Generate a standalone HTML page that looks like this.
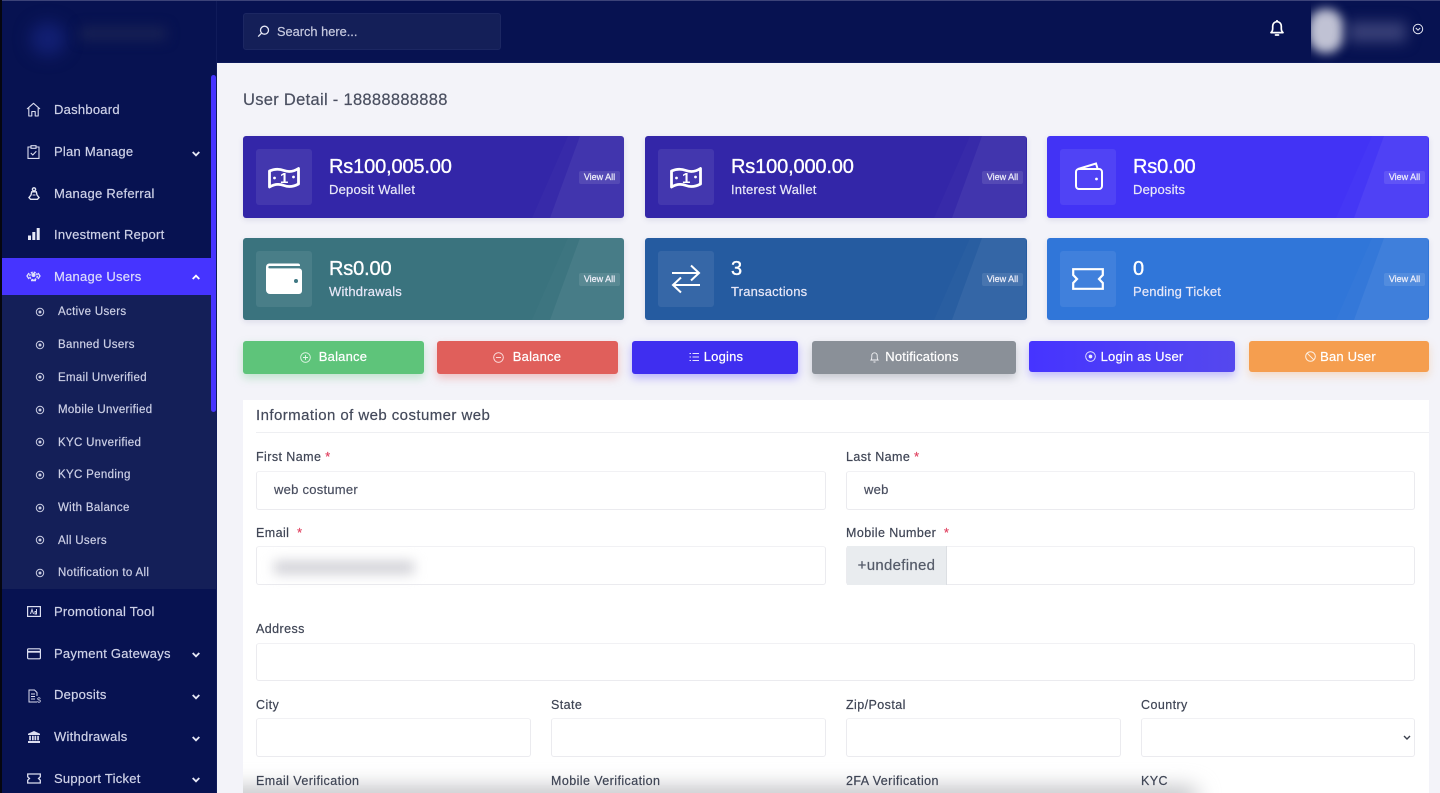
<!DOCTYPE html>
<html lang="en"><head><meta charset="utf-8"><title>User Detail</title>
<style>
*{box-sizing:border-box;margin:0;padding:0}
html,body{width:1440px;height:793px;overflow:hidden;background:#f3f3f9;font-family:"Liberation Sans",sans-serif}
#root{position:relative;width:1440px;height:793px;overflow:hidden;background:#f3f3f9;-webkit-text-stroke:.2px}
.a{position:absolute}
.t{position:absolute;white-space:nowrap;line-height:20px;height:20px;margin-top:1px}
svg{position:absolute;display:block;overflow:visible}
.n{left:54px;font-size:13px;letter-spacing:.25px;color:#cfd2e8}
.s{left:58px;font-size:11.5px;letter-spacing:.33px;color:#cdd0e6}
.card{position:absolute;width:381px;height:82px;border-radius:3px;overflow:hidden;box-shadow:0 2px 6px rgba(60,60,120,.12)}
.card i{position:absolute;inset:0;background:rgba(255,255,255,.02);clip-path:polygon(325px 0,381px 0,381px 82px,289px 82px)}
.card b{position:absolute;inset:0;background:rgba(255,255,255,.055);clip-path:polygon(337px 0,381px 0,381px 82px,307px 82px)}
.box{position:absolute;left:13px;top:13px;width:56px;height:56px;background:rgba(255,255,255,.08);border-radius:3px}
.val{position:absolute;left:86px;top:19px;font-size:20px;line-height:24px;color:#fff;letter-spacing:-.15px;white-space:nowrap;-webkit-text-stroke:.35px #fff}
.lab{position:absolute;left:86px;top:44px;font-size:13px;line-height:20px;color:#e8e8f8;letter-spacing:.2px;white-space:nowrap}
.va{position:absolute;right:4px;top:35px;width:41px;height:13px;background:rgba(255,255,255,.1);border-radius:2px;color:#f0f0fa;font-size:9px;line-height:13px;text-align:center}
.btn{position:absolute;top:341px;height:33px;border-radius:3px;color:#fff;font-size:13px;line-height:32px;text-align:center;letter-spacing:.2px}
.l{position:absolute;font-size:12.5px;line-height:16px;color:#3f4555;letter-spacing:.42px;white-space:nowrap;margin-top:1px}
.l em{color:#e0405f;font-style:normal}
.f{position:absolute;background:#fff;border:1px solid #ebebef;border-top-color:#f1f1f4;border-radius:3px}
</style></head><body><div id="root">

<!-- Header -->
<div class="a" style="left:0;top:0;width:1440px;height:63px;background:#071251;border-top:1px solid #3c4378;border-bottom:1px solid #0d1a5c"></div>
<div class="a" style="left:243px;top:13px;width:258px;height:37px;background:#141f58;border:1px solid #1c2762;border-radius:3px"></div>
<svg style="left:257px;top:25px" width="13" height="13" viewBox="0 0 13 13" fill="none" stroke="#e4e6f4" stroke-width="1.3"><circle cx="7.5" cy="5.2" r="4"/><path d="M4.6 8.1 1.2 11.6"/></svg>
<div class="t" style="left:277px;top:21px;font-size:12.8px;color:#c7cae0;letter-spacing:0">Search here...</div>
<svg style="left:1269px;top:19px" width="16" height="18" viewBox="0 0 16 18" fill="none" stroke="#fff" stroke-width="1.7"><path d="M2 13.6c1.3-1 1.7-2.200 1.700-4.200V7a4.300 4.300 0 0 1 8.600 0v2.400c0 2 .4 3.200 1.700 4.200z" stroke-linejoin="round"/><path d="M6.500 16h3" stroke-linecap="round"/><path d="M8 1v1.500"/></svg>
<div class="a" style="left:1308px;top:9px;width:36px;height:44px;background:#c0c2d4;filter:blur(5px);border-radius:45%;clip-path:inset(-10px -20px -10px 3px)"></div>
<div class="a" style="left:1348px;top:22px;width:58px;height:20px;background:#3a4178;filter:blur(7px)"></div>
<svg style="left:1412px;top:23px" width="12" height="12" viewBox="0 0 12 12" fill="none" stroke="#e6e7f2" stroke-width="1"><circle cx="6" cy="6" r="4.700"/><path d="M3.800 5l2.200 2.200L8.200 5"/></svg>

<!-- Sidebar -->
<div class="a" style="left:0;top:0;width:2px;height:793px;background:#05060f"></div>
<div class="a" style="left:2px;top:1px;width:215px;height:792px;background:#071251;border-right:1px solid #101b5a"></div>
<div class="a" style="left:30px;top:22px;width:36px;height:34px;background:#121f72;filter:blur(8px);border-radius:50%"></div>
<div class="a" style="left:80px;top:27px;width:86px;height:13px;background:#182154;filter:blur(6px)"></div>
<div class="a" style="left:2px;top:258px;width:210px;height:37px;background:#4634ff"></div>
<div class="a" style="left:2px;top:295px;width:214px;height:294px;background:#141f58"></div>
<div class="a" style="left:211px;top:75px;width:5px;height:337px;background:#4634ff;border-radius:3px"></div>

<svg style="left:26px;top:102px" width="15" height="15" viewBox="0 0 15 15" fill="none" stroke="#dcdef0" stroke-width="1.100" stroke-linejoin="round"><path d="M1 7 7.500 1.300 14 7"/><path d="M2.800 5.800V14h3V9.500h3.400V14h3V5.800"/></svg>
<div class="t n" style="top:99px">Dashboard</div>
<svg style="left:27px;top:145px" width="13" height="14" viewBox="0 0 13 14" fill="none" stroke="#dcdef0" stroke-width="1.100"><path d="M4 2H1v11.400h11V2H9"/><rect x="4" y=".7" width="5" height="2.600"/><path d="m3.800 8 2 2 3.500-3.700"/></svg>
<div class="t n" style="top:141px">Plan Manage</div>
<svg style="left:28px;top:187px" width="12" height="14" viewBox="0 0 12 14" fill="none" stroke="#e4e6f4" stroke-width="1.400"><circle cx="6" cy="2.400" r="1.600"/><path d="M3.700 4.800h4.600L9 8l2 2.600-1.600 1.700H2.600L1 10.600 3 8z"/><path d="M4.500 8h3" stroke-width="1"/></svg>
<div class="t n" style="top:183px">Manage Referral</div>
<svg style="left:28px;top:228px" width="12" height="12" viewBox="0 0 12 12" fill="#e6e8f6"><rect y="7.500" width="3" height="4.500"/><rect x="4.300" y="4" width="3" height="8"/><rect x="8.700" y="0" width="3" height="12"/></svg>
<div class="t n" style="top:224px">Investment Report</div>
<svg style="left:26px;top:270px" width="15" height="12" viewBox="0 0 15 12" fill="none" stroke="#dfe0fb" stroke-width="1.500"><circle cx="7.500" cy="6" r="3.800" stroke-dasharray="2 1"/><circle cx="7.500" cy="5" r="1.300" fill="#dfe0fb"/><path d="M5 10.500h5" /><path d="M3 3 1 6l2 3M12 3l2 3-2 3" stroke-width="1.300"/></svg>
<div class="t n" style="top:266px;color:#dcdcfb">Manage Users</div>

<svg style="left:192px;top:151px" width="8" height="6" viewBox="0 0 8 6" fill="none" stroke="#e6e8f6" stroke-width="1.800"><path d="m.7 1 3.300 3.300L7.300 1"/></svg>
<svg style="left:192px;top:274px" width="8" height="6" viewBox="0 0 8 6" fill="none" stroke="#fff" stroke-width="1.800"><path d="m.7 5L4 1.700 7.300 5"/></svg>
<svg style="left:192px;top:652px" width="8" height="6" viewBox="0 0 8 6" fill="none" stroke="#e6e8f6" stroke-width="1.800"><path d="m.7 1 3.300 3.300L7.300 1"/></svg>
<svg style="left:192px;top:694px" width="8" height="6" viewBox="0 0 8 6" fill="none" stroke="#e6e8f6" stroke-width="1.800"><path d="m.7 1 3.300 3.300L7.300 1"/></svg>
<svg style="left:192px;top:736px" width="8" height="6" viewBox="0 0 8 6" fill="none" stroke="#e6e8f6" stroke-width="1.800"><path d="m.7 1 3.300 3.300L7.300 1"/></svg>
<svg style="left:192px;top:777px" width="8" height="6" viewBox="0 0 8 6" fill="none" stroke="#e6e8f6" stroke-width="1.800"><path d="m.7 1 3.300 3.300L7.300 1"/></svg>

<svg style="left:35px;top:306px" width="10" height="270" viewBox="0 0 10 270" fill="none" stroke="#c9cce2" stroke-width="1">
<circle cx="5" cy="6" r="3.700"/><circle cx="5" cy="6" r="1" fill="#c9cce2"/>
<circle cx="5" cy="39" r="3.700"/><circle cx="5" cy="39" r="1" fill="#c9cce2"/>
<circle cx="5" cy="71" r="3.700"/><circle cx="5" cy="71" r="1" fill="#c9cce2"/>
<circle cx="5" cy="104" r="3.700"/><circle cx="5" cy="104" r="1" fill="#c9cce2"/>
<circle cx="5" cy="136" r="3.700"/><circle cx="5" cy="136" r="1" fill="#c9cce2"/>
<circle cx="5" cy="169" r="3.700"/><circle cx="5" cy="169" r="1" fill="#c9cce2"/>
<circle cx="5" cy="202" r="3.700"/><circle cx="5" cy="202" r="1" fill="#c9cce2"/>
<circle cx="5" cy="234" r="3.700"/><circle cx="5" cy="234" r="1" fill="#c9cce2"/>
<circle cx="5" cy="267" r="3.700"/><circle cx="5" cy="267" r="1" fill="#c9cce2"/>
</svg>
<div class="t s" style="top:301px">Active Users</div>
<div class="t s" style="top:334px">Banned Users</div>
<div class="t s" style="top:367px">Email Unverified</div>
<div class="t s" style="top:399px">Mobile Unverified</div>
<div class="t s" style="top:432px">KYC Unverified</div>
<div class="t s" style="top:464px">KYC Pending</div>
<div class="t s" style="top:497px">With Balance</div>
<div class="t s" style="top:530px">All Users</div>
<div class="t s" style="top:562px">Notification to All</div>

<svg style="left:27px;top:606px" width="14" height="11" viewBox="0 0 14 11" fill="none" stroke="#dcdef0" stroke-width="1.200"><rect x=".6" y=".6" width="12.800" height="9.800"/><path d="M3.500 8 5 3.500 6.500 8M9.500 3v5H8V5.500h1.500" stroke-width="1"/></svg>
<div class="t n" style="top:601px">Promotional Tool</div>
<svg style="left:27px;top:648px" width="14" height="12" viewBox="0 0 14 12" fill="none" stroke="#dcdef0" stroke-width="1.200"><rect x=".6" y=".8" width="12.800" height="10" rx="1"/><path d="M.6 3.800h12.800" stroke-width="1.800"/></svg>
<div class="t n" style="top:643px">Payment Gateways</div>
<svg style="left:28px;top:689px" width="14" height="14" viewBox="0 0 14 14" fill="none" stroke="#dcdef0" stroke-width="1"><path d="M9 13H1V1h5.500L9 3.500V7"/><path d="M3 5h4M3 7.500h4M3 10h4"/><text x="9" y="13.500" font-size="7" fill="#dcdef0" stroke="none" font-family="Liberation Sans">$</text></svg>
<div class="t n" style="top:684px">Deposits</div>
<svg style="left:28px;top:731px" width="12" height="12" viewBox="0 0 12 12" fill="#dcdef0"><path d="M6 0 12 2.800V4H0V2.800z"/><rect x="1.200" y="4.800" width="1.700" height="4.500"/><rect x="4" y="4.800" width="1.700" height="4.500"/><rect x="6.500" y="4.800" width="1.700" height="4.500"/><rect x="9.200" y="4.800" width="1.700" height="4.500"/><rect y="10" width="12" height="2"/></svg>
<div class="t n" style="top:726px">Withdrawals</div>
<svg style="left:27px;top:773px" width="14" height="11" viewBox="0 0 14 11" fill="none" stroke="#dcdef0" stroke-width="1.300"><path d="M.7 1h12.600v2.800L11.500 5.500l1.800 1.700V10H.7V7.200L2.500 5.500.7 3.800z"/></svg>
<div class="t n" style="top:768px">Support Ticket</div>

<!-- Title -->
<div class="t" style="left:243px;top:89px;font-size:16.5px;color:#4a4f60;letter-spacing:.3px">User Detail - 18888888888</div>

<!-- Stat cards -->
<div class="card" style="left:243px;top:136px;background:#3326a8"><i></i><b></b><div class="box"><svg style="left:12px;top:17px" width="32" height="23" viewBox="0 0 32 23" fill="none" stroke="#fff" stroke-width="2.800"><path d="M1.500 5C7 2.500 12 3 16 4.500s9 1.500 14.500-2V18c-5.500 3-10.500 3-14.500 1.500S7 17.500 1.500 21z" stroke-linejoin="round"/><text x="12" y="17" font-size="15" font-weight="700" fill="#fff" stroke="none" font-family="Liberation Sans">1</text><circle cx="6.500" cy="12" r="1.400" fill="#fff" stroke="none"/><circle cx="25.500" cy="11" r="1.400" fill="#fff" stroke="none"/></svg></div><div class="val">Rs100,005.00</div><div class="lab">Deposit Wallet</div><div class="va">View All</div></div>

<div class="card" style="left:645px;top:136px;width:382px;background:#3326a8"><i></i><b></b><div class="box"><svg style="left:12px;top:17px" width="32" height="23" viewBox="0 0 32 23" fill="none" stroke="#fff" stroke-width="2.800"><path d="M1.500 5C7 2.500 12 3 16 4.500s9 1.500 14.500-2V18c-5.500 3-10.500 3-14.500 1.500S7 17.500 1.500 21z" stroke-linejoin="round"/><text x="12" y="17" font-size="15" font-weight="700" fill="#fff" stroke="none" font-family="Liberation Sans">1</text><circle cx="6.500" cy="12" r="1.400" fill="#fff" stroke="none"/><circle cx="25.500" cy="11" r="1.400" fill="#fff" stroke="none"/></svg></div><div class="val">Rs100,000.00</div><div class="lab">Interest Wallet</div><div class="va">View All</div></div>

<div class="card" style="left:1047px;top:136px;width:382px;background:#4233f5"><i></i><b></b><div class="box"><svg style="left:15px;top:13px" width="28" height="28" viewBox="0 0 28 28" fill="none" stroke="#fff" stroke-width="2"><rect x="1" y="7" width="26" height="20" rx="3"/><path d="M3 7 21 1.500l1.500 5"/><circle cx="21.500" cy="17" r="1.400" fill="#fff" stroke="none"/></svg></div><div class="val">Rs0.00</div><div class="lab">Deposits</div><div class="va">View All</div></div>

<div class="card" style="left:243px;top:238px;background:#3a737e"><i></i><b></b><div class="box"><svg style="left:10px;top:12px" width="36" height="32" viewBox="0 0 36 32" fill="#fff"><path d="M3 .5h29a2 2 0 0 1 2 2V3H3.500a1.200 1.200 0 0 0 0 2.400H33a3 3 0 0 1 3 3V28a3 3 0 0 1-3 3H4a4 4 0 0 1-4-4V4A3.500 3.500 0 0 1 3 .5z"/><circle cx="30" cy="18" r="2" fill="#3f7883"/></svg></div><div class="val">Rs0.00</div><div class="lab">Withdrawals</div><div class="va">View All</div></div>

<div class="card" style="left:645px;top:238px;width:382px;background:#255ba0"><i></i><b></b><div class="box"><svg style="left:13px;top:13px" width="30" height="30" viewBox="0 0 30 30" fill="none" stroke="#fff" stroke-width="2"><path d="M1 9h27M20 1.500 28 9l-8 7.500"/><path d="M29 21H2M10 13.500 2 21l8 7.500"/></svg></div><div class="val">3</div><div class="lab">Transactions</div><div class="va">View All</div></div>

<div class="card" style="left:1047px;top:238px;width:382px;background:#3076d9"><i></i><b></b><div class="box"><svg style="left:12px;top:17px" width="32" height="22" viewBox="0 0 32 22" fill="none" stroke="#fff" stroke-width="2.200"><path d="M1.200 1.200h29.600v5.800L27 11l3.800 4v5.800H1.200V15L5 11 1.200 7z"/></svg></div><div class="val">0</div><div class="lab">Pending Ticket</div><div class="va">View All</div></div>

<!-- Action buttons -->
<div class="btn" style="left:243px;width:181px;background:#5ec47a;box-shadow:0 4px 9px rgba(94,196,122,.35)">
<svg style="left:57px;top:11px" width="11" height="11" viewBox="0 0 11 11" fill="none" stroke="#e6f7ea" stroke-width=".9"><circle cx="5.500" cy="5.500" r="4.800"/><path d="M5.500 3v5M3 5.500h5"/></svg><span style="margin-left:19px">Balance</span></div>
<div class="btn" style="left:437px;width:181px;background:#e05f5b;box-shadow:0 4px 9px rgba(224,95,91,.35)">
<svg style="left:56px;top:11px" width="11" height="11" viewBox="0 0 11 11" fill="none" stroke="#fde9e8" stroke-width=".9"><circle cx="5.500" cy="5.500" r="4.800"/><path d="M3 5.500h5"/></svg><span style="margin-left:19px">Balance</span></div>
<div class="btn" style="left:632px;width:166px;background:#3f2ef0;box-shadow:0 4px 9px rgba(70,52,255,.35)">
<svg style="left:57px;top:11px" width="10" height="10" viewBox="0 0 10 10" fill="none" stroke="#e4e2ff" stroke-width=".9"><path d="M3.500 1.500H10M3.500 5H10M3.500 8.500H10M.5 1.500h1.500M.5 5h1.500M.5 8.500h1.500"/></svg><span style="margin-left:17px">Logins</span></div>
<div class="btn" style="left:812px;width:204px;background:#8a9098;box-shadow:0 4px 9px rgba(110,115,125,.35)">
<svg style="left:58px;top:10px" width="9" height="12" viewBox="0 0 9 12" fill="none" stroke="#f0f1f3" stroke-width=".9"><path d="M1 9c.7-.8.8-1.600.8-3V4.500a2.700 2.700 0 0 1 5.400 0V6c0 1.400.1 2.200.8 3zM3.500 11h2"/></svg><span style="margin-left:16px">Notifications</span></div>
<div class="btn" style="left:1029px;width:206px;height:31px;line-height:31px;background:linear-gradient(90deg,#4634ff,#5548ee);box-shadow:0 4px 9px rgba(70,52,255,.3)">
<svg style="left:56px;top:10px" width="11" height="11" viewBox="0 0 11 11" fill="none" stroke="#ecebff" stroke-width=".9"><circle cx="5.500" cy="5.500" r="4.800"/><circle cx="5.500" cy="5.500" r="1.400" fill="#ecebff"/></svg><span style="margin-left:20px">Login as User</span></div>
<div class="btn" style="left:1249px;width:180px;height:31px;line-height:31px;background:#f59e4f;box-shadow:0 4px 9px rgba(245,158,79,.3)">
<svg style="left:56px;top:10px" width="11" height="11" viewBox="0 0 11 11" fill="none" stroke="#fdf0e3" stroke-width="1"><circle cx="5.500" cy="5.500" r="4.800"/><path d="m2.200 2.200 6.600 6.600"/></svg><span style="margin-left:18px">Ban User</span></div>

<!-- Form card -->
<div class="a" style="left:243px;top:400px;width:1186px;height:393px;background:#fff"></div>
<div class="a" style="left:256px;top:432px;width:1173px;height:1px;background:#eeeff2"></div>
<div class="t" style="left:256px;top:405px;font-size:15px;color:#444a5b;letter-spacing:.43px">Information of web costumer web</div>

<div class="l" style="left:256px;top:448px">First Name<em> *</em></div>
<div class="l" style="left:846px;top:448px">Last Name<em> *</em></div>
<div class="f" style="left:256px;top:471px;width:570px;height:39px"></div>
<div class="f" style="left:846px;top:471px;width:569px;height:39px"></div>
<div class="t" style="left:274px;top:479px;font-size:13px;color:#4a4f60;letter-spacing:.25px">web costumer</div>
<div class="t" style="left:864px;top:479px;font-size:13px;color:#4a4f60;letter-spacing:.25px">web</div>

<div class="l" style="left:256px;top:524px">Email<em>&nbsp; *</em></div>
<div class="l" style="left:846px;top:524px">Mobile Number<em>&nbsp; *</em></div>
<div class="f" style="left:256px;top:546px;width:570px;height:39px"></div>
<div class="a" style="left:274px;top:561px;width:140px;height:13px;background:#d0d0d6;filter:blur(6px)"></div>
<div class="f" style="left:846px;top:546px;width:569px;height:39px"></div>
<div class="a" style="left:847px;top:546px;width:100px;height:39px;background:#e9ecef;border-right:1px solid #dcdfe3;color:#555b69;font-size:15px;line-height:39px;text-align:center;letter-spacing:.3px">+undefined</div>

<div class="l" style="left:256px;top:620px">Address</div>
<div class="f" style="left:256px;top:643px;width:1159px;height:38px"></div>

<div class="l" style="left:256px;top:696px">City</div>
<div class="l" style="left:551px;top:696px">State</div>
<div class="l" style="left:846px;top:696px">Zip/Postal</div>
<div class="l" style="left:1141px;top:696px">Country</div>
<div class="f" style="left:256px;top:718px;width:275px;height:39px"></div>
<div class="f" style="left:551px;top:718px;width:275px;height:39px"></div>
<div class="f" style="left:846px;top:718px;width:275px;height:39px"></div>
<div class="f" style="left:1141px;top:718px;width:274px;height:39px"></div>
<svg style="left:1403px;top:735px" width="8" height="6" viewBox="0 0 8 6" fill="none" stroke="#3a3f4c" stroke-width="1.400"><path d="m1 1 3 3 3-3"/></svg>

<!-- bottom fade, clipped to the form card -->
<div class="a" style="left:243px;top:760px;width:1186px;height:33px;overflow:hidden"><div class="a" style="left:-30px;top:28px;width:985px;height:20px;background:#b8b9bd;filter:blur(11px);border-radius:10px"></div></div>

<div class="l" style="left:256px;top:772px">Email Verification</div>
<div class="l" style="left:551px;top:772px">Mobile Verification</div>
<div class="l" style="left:846px;top:772px">2FA Verification</div>
<div class="l" style="left:1141px;top:772px">KYC</div>
</div></body></html>
